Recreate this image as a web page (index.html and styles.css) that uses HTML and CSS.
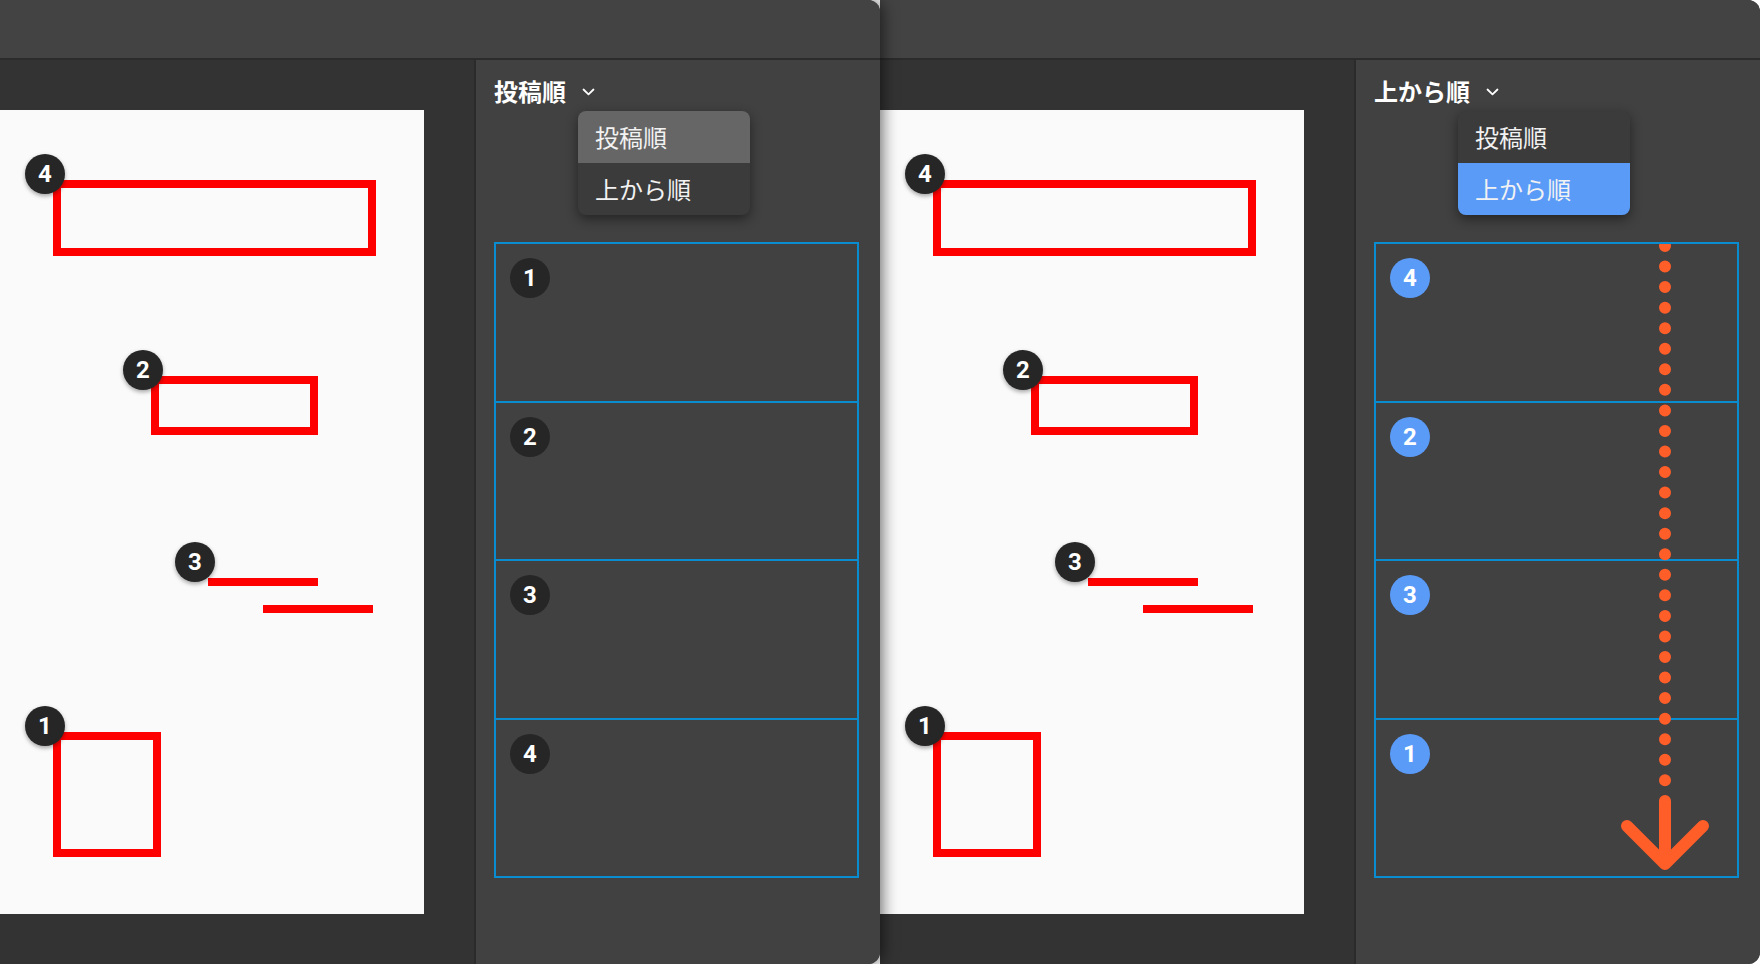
FILE: index.html
```html
<!DOCTYPE html>
<html lang="ja">
<head>
<meta charset="utf-8">
<title>並び順</title>
<link rel="stylesheet" href="styles.css">
</head>
<body>
  <!-- Window A: sorted by posting order -->
  <section class="window window--front">
    <header class="titlebar"></header>
    <div class="workspace">
      <div class="canvas">
        <div class="page">
          <div class="shape shape--rect4"></div>
          <div class="shape shape--rect2"></div>
          <div class="shape shape--line3a"></div>
          <div class="shape shape--line3b"></div>
          <div class="shape shape--rect1"></div>
          <span class="pin pin--4">4</span>
          <span class="pin pin--2">2</span>
          <span class="pin pin--3">3</span>
          <span class="pin pin--1">1</span>
        </div>
      </div>
      <aside class="panel">
        <div class="sort">
          <span class="sort-label">投稿順</span>
          <svg class="chevron" width="13" height="8" viewBox="0 0 13 8"><path d="M1.5 1.5 L6.5 6.3 L11.5 1.5" fill="none" stroke="#fff" stroke-width="1.8" stroke-linecap="round" stroke-linejoin="round"/></svg>
        </div>
        <ul class="menu">
          <li class="menu-item menu-item--hover">投稿順</li>
          <li class="menu-item">上から順</li>
        </ul>
        <div class="list">
          <div class="row"><span class="num">1</span></div>
          <div class="row"><span class="num">2</span></div>
          <div class="row"><span class="num">3</span></div>
          <div class="row"><span class="num">4</span></div>
        </div>
      </aside>
    </div>
  </section>

  <!-- Window B: sorted top to bottom -->
  <section class="window">
    <header class="titlebar"></header>
    <div class="workspace">
      <div class="canvas">
        <div class="page">
          <div class="shape shape--rect4"></div>
          <div class="shape shape--rect2"></div>
          <div class="shape shape--line3a"></div>
          <div class="shape shape--line3b"></div>
          <div class="shape shape--rect1"></div>
          <span class="pin pin--4">4</span>
          <span class="pin pin--2">2</span>
          <span class="pin pin--3">3</span>
          <span class="pin pin--1">1</span>
        </div>
      </div>
      <aside class="panel">
        <div class="sort">
          <span class="sort-label">上から順</span>
          <svg class="chevron" width="13" height="8" viewBox="0 0 13 8"><path d="M1.5 1.5 L6.5 6.3 L11.5 1.5" fill="none" stroke="#fff" stroke-width="1.8" stroke-linecap="round" stroke-linejoin="round"/></svg>
        </div>
        <ul class="menu">
          <li class="menu-item">投稿順</li>
          <li class="menu-item menu-item--selected">上から順</li>
        </ul>
        <div class="list">
          <div class="row"><span class="num num--blue">4</span></div>
          <div class="row"><span class="num num--blue">2</span></div>
          <div class="row"><span class="num num--blue">3</span></div>
          <div class="row"><span class="num num--blue">1</span></div>
          <svg class="flow" viewBox="0 0 361 632" width="361" height="632">
            <line x1="289" y1="2" x2="289" y2="537" stroke="#ff5e29" stroke-width="12" stroke-linecap="round" stroke-dasharray="0 20.55"/>
            <path d="M289 557 L289 620 M251 582 L289 620 L327 582" fill="none" stroke="#ff5e29" stroke-width="12" stroke-linecap="round" stroke-linejoin="round"/>
          </svg>
        </div>
      </aside>
    </div>
  </section>
</body>
</html>
```

FILE: styles.css
```css
html, body {
  margin: 0;
  padding: 0;
}

body {
  width: 1760px;
  height: 964px;
  overflow: hidden;
  background: #ffffff;
  display: flex;
  font-family: "Noto Sans CJK JP", "Noto Sans", sans-serif;
  color: #ffffff;
}

.window {
  position: relative;
  width: 880px;
  height: 964px;
  flex: 0 0 880px;
  display: flex;
  flex-direction: column;
  border-radius: 0 12px 12px 0;
  overflow: hidden;
  background: #333333;
}

.window--front {
  z-index: 2;
  box-shadow: 2px 0 16px rgba(0, 0, 0, 0.6);
}

.titlebar {
  height: 58px;
  flex: 0 0 58px;
  background: #434343;
  border-bottom: 2px solid #2b2b2b;
}

.workspace {
  flex: 1;
  display: flex;
  min-height: 0;
}

/* drawing area */
.canvas {
  width: 474px;
  flex: 0 0 474px;
  background: #333333;
  padding-top: 50px;
  box-sizing: border-box;
}

.page {
  position: relative;
  width: 424px;
  height: 804px;
  background: #fafafa;
}

.shape {
  position: absolute;
  box-sizing: border-box;
  border: 8px solid #ff0000;
}

.shape--rect4 { left: 53px; top: 70px; width: 323px; height: 76px; }
.shape--rect2 { left: 151px; top: 266px; width: 167px; height: 59px; }
.shape--rect1 { left: 53px; top: 622px; width: 108px; height: 125px; }

.shape--line3a,
.shape--line3b {
  border: none;
  background: #ff0000;
  width: 110px;
  height: 8px;
}
.shape--line3a { left: 208px; top: 468px; }
.shape--line3b { left: 263px; top: 495px; }

.pin {
  position: absolute;
  width: 40px;
  height: 40px;
  border-radius: 50%;
  background: #262626;
  color: #ffffff;
  font: 700 24px/40px "Roboto", "Liberation Sans", sans-serif;
  text-align: center;
  box-shadow: 0 2px 4px rgba(0, 0, 0, 0.35);
}

.pin--4 { left: 25px; top: 44px; }
.pin--2 { left: 123px; top: 240px; }
.pin--3 { left: 175px; top: 432px; }
.pin--1 { left: 25px; top: 596px; }

/* sort panel */
.panel {
  position: relative;
  flex: 1;
  background: #414141;
  border-left: 2px solid #2b2b2b;
  padding-left: 18px;
}

.sort {
  display: flex;
  align-items: center;
  gap: 16px;
  padding-top: 13px;
  height: 36px;
}

.sort-label {
  font-size: 24px;
  font-weight: 700;
  line-height: 36px;
}

.chevron {
  display: block;
  margin-top: 1px;
}

.menu {
  position: absolute;
  left: 102px;
  top: 51px;
  width: 172px;
  margin: 0;
  padding: 0;
  list-style: none;
  background: #3b3b3b;
  border-radius: 8px;
  overflow: hidden;
  box-shadow: 0 4px 12px rgba(0, 0, 0, 0.45);
  z-index: 3;
}

.menu-item {
  height: 52px;
  line-height: 52px;
  padding-left: 17px;
  font-size: 24px;
  font-weight: 400;
  color: #f2f2f2;
}

.menu-item--hover { background: #666666; }
.menu-item--selected { background: #5a9bf8; }

.list {
  position: relative;
  margin-top: 133px;
  width: 365px;
  height: 636px;
  box-sizing: border-box;
  border: 2px solid #0a8dd0;
  display: flex;
  flex-direction: column;
  overflow: hidden;
}

.row {
  flex: 1;
  padding: 14px 0 0 14px;
}

.row + .row {
  border-top: 2px solid #0a8dd0;
}

.num {
  display: block;
  width: 40px;
  height: 40px;
  border-radius: 50%;
  background: #262626;
  color: #ffffff;
  font: 700 24px/40px "Roboto", "Liberation Sans", sans-serif;
  text-align: center;
}

.num--blue { background: #5a9bf8; }

.flow {
  position: absolute;
  left: 0;
  top: 0;
}
```
